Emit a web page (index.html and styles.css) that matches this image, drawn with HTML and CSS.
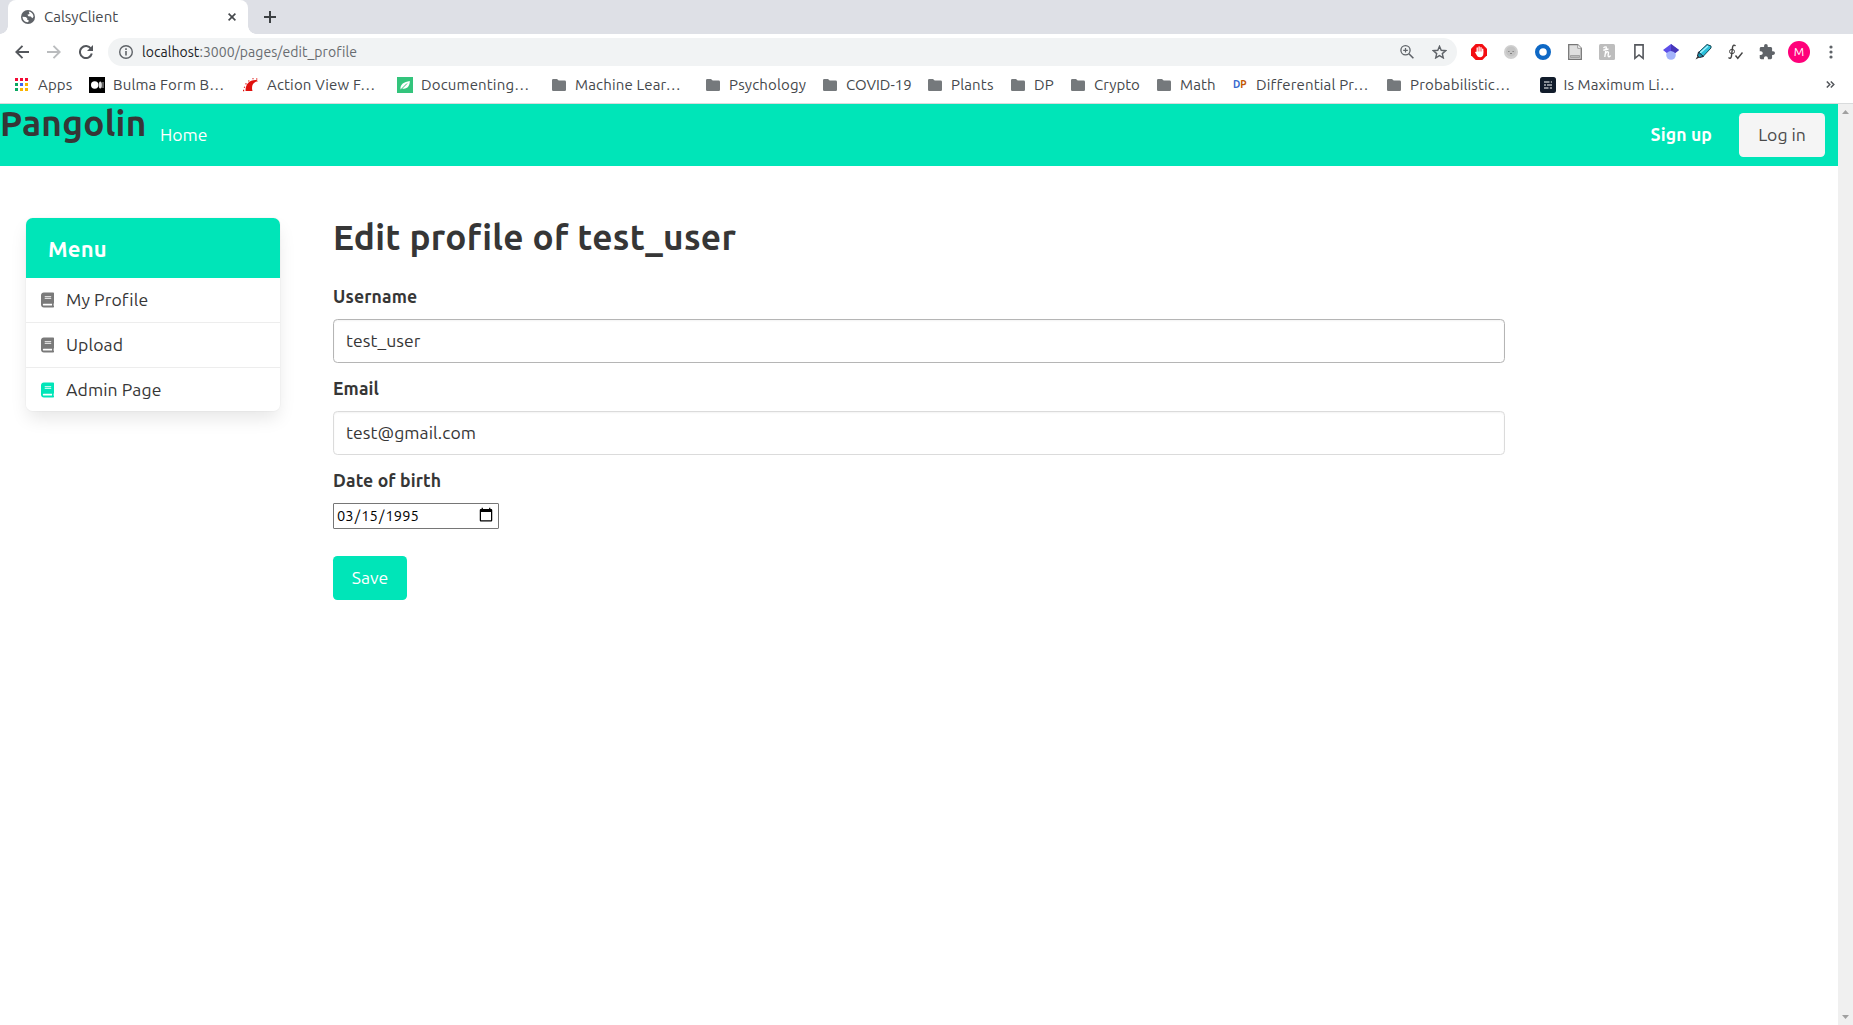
FILE: index.html
```html
<!DOCTYPE html>
<html lang="en-US">
<head>
<meta charset="utf-8">
<title>CalsyClient</title>
<link rel="stylesheet" href="styles.css">
</head>
<body>
<svg width="0" height="0" class="defs">
  <symbol id="folder" viewBox="0 0 14 12"><path d="M0 1.200Q0 0 1.200 0H5l1.700 1.600h6Q14 1.600 14 2.900v7.800Q14 12 12.800 12H1.200Q0 12 0 10.800z" fill="#75797c"/></symbol>
  <symbol id="book" viewBox="0 0 448 512"><path fill="currentColor" d="M448 360V24c0-13.300-10.700-24-24-24H96C43 0 0 43 0 96v320c0 53 43 96 96 96h328c13.300 0 24-10.700 24-24v-16c0-7.500-3.500-14.300-8.900-18.700-4.200-15.400-4.200-59.300 0-74.700 5.400-4.300 8.900-11.100 8.900-18.600zM128 134c0-3.300 2.700-6 6-6h212c3.300 0 6 2.700 6 6v20c0 3.300-2.700 6-6 6H134c-3.300 0-6-2.700-6-6v-20zm0 64c0-3.300 2.700-6 6-6h212c3.300 0 6 2.700 6 6v20c0 3.300-2.700 6-6 6H134c-3.300 0-6-2.700-6-6v-20zm253.400 250H96c-17.700 0-32-14.300-32-32 0-17.600 14.400-32 32-32h285.400c-1.900 17.100-1.900 46.900 0 64z"/></symbol>
</svg>

<div class="tabstrip">
  <div class="tab">
    <svg class="globe" width="14" height="14" viewBox="0 0 14 14"><circle cx="7" cy="7" r="7" fill="#5f6368"/><path d="M1.500 6.800l3.200.1 1.600 1.300-.2 1.500 1.500.2-.2 2.200C4 12.500 1.500 10 1.500 6.800zM7.800 1.500c2.600.3 4.600 2.500 4.700 5.300l-1.200 1.400-1.500-1.800-2.400-.1-1-1.500 2.100-.7z" fill="#fff"/></svg>
    <span class="tab-title">CalsyClient</span>
    <svg width="8" height="8" viewBox="0 0 8 8"><path d="M.6.6l6.800 6.800M7.400.6L.6 7.400" stroke="#45484c" stroke-width="1.600"/></svg>
  </div>
  <svg class="newtab" width="12" height="12" viewBox="0 0 12 12"><path d="M6 0v12M0 6h12" stroke="#3c4043" stroke-width="2"/></svg>
</div>

<div class="toolbar">
  <span class="cell"><svg width="14" height="14" viewBox="0 0 14 14"><path d="M14 7H1.500M7.500.8L1.300 7l6.200 6.200" fill="none" stroke="#54575c" stroke-width="1.900"/></svg></span>
  <span class="cell"><svg width="14" height="14" viewBox="0 0 14 14"><path d="M0 7h12.500M6.500.8L12.700 7l-6.200 6.200" fill="none" stroke="#babcbe" stroke-width="1.900"/></svg></span>
  <span class="cell"><svg width="14" height="14" viewBox="0 0 14 14"><path d="M12 3.800A6 6 0 1 0 12.800 8.500" fill="none" stroke="#54575c" stroke-width="2"/><path d="M14 0v6H8z" fill="#54575c"/></svg></span>
  <div class="omnibox">
    <svg width="14" height="14" viewBox="0 0 14 14"><circle cx="7" cy="7" r="6.300" fill="none" stroke="#5f6368" stroke-width="1.400"/><path d="M7 6v4.500M7 3.200v1.700" stroke="#5f6368" stroke-width="1.600"/></svg>
    <span class="url"><b>localhost</b>:3000/pages/edit_profile</span>
    <span class="cell"><svg width="14" height="14" viewBox="0 0 14 14"><circle cx="5.500" cy="5.300" r="4.600" fill="none" stroke="#5f6368" stroke-width="1.300"/><path d="M5.500 3v4.600M3.200 5.300h4.600" stroke="#5f6368" stroke-width="1.200"/><path d="M8.900 8.700l4.500 4.600" stroke="#5f6368" stroke-width="1.600"/></svg></span>
    <span class="cell"><svg width="15" height="14" viewBox="0 0 15 14"><path d="M7.500 1.300l1.700 4 4.400.4-3.300 2.900 1 4.300-3.800-2.300-3.800 2.300 1-4.300L1.400 5.700l4.400-.4z" fill="none" stroke="#5f6368" stroke-width="1.400"/></svg></span>
  </div>
  <span class="cell"><svg width="16" height="16" viewBox="0 0 16 16"><path d="M4.700 0h6.600L16 4.700v6.600L11.300 16H4.700L0 11.300V4.700z" fill="#f40d12"/><path d="M6.200 8V4M8.100 8V3M10 8V3.700M11.700 8V5.200" stroke="#fff" stroke-width="1.300" stroke-linecap="round"/><path d="M5.500 7.500h6.850v2.300c0 2.300-1.300 3.400-3.300 3.400-1.900 0-2.600-.8-3.300-2L4 8.200q.6-1 1.500-.1z" fill="#fff"/></svg></span>
  <span class="cell"><svg width="14" height="14" viewBox="0 0 14 14"><circle cx="7" cy="7" r="7" fill="#d0d0d0"/><circle cx="7" cy="6.500" r="5" fill="#c4c4c4"/><path d="M4.200 6.500h1.300M8.500 6.500h1.300M6 8.500h2" stroke="#808080" fill="none"/></svg></span>
  <span class="cell"><svg width="16" height="16" viewBox="0 0 16 16"><circle cx="8" cy="8" r="5.900" fill="#fff" stroke="#0e68c5" stroke-width="4.200"/></svg></span>
  <span class="cell"><svg width="14" height="16" viewBox="0 0 14 16"><path d="M.7.7h9l3.600 3.600v11H.7z" fill="#e0e0e0" stroke="#777" stroke-width="1.300"/><path d="M9.700.7v3.600h3.600" fill="#fff" stroke="#999"/><path d="M2.500 11.500h9v2h-9z" fill="#bbb" stroke="#888" stroke-width=".6"/></svg></span>
  <span class="cell"><svg width="16" height="16" viewBox="0 0 16 16"><rect width="16" height="16" rx="1.500" fill="#bdbdbd"/><path d="M4.500 4Q6 2.300 7.300 3.200L5.800 13M6.500 9.500Q8 7.300 9 7.800q.9.500.3 2.200-.7 3 .8 2.700 1-.2 1.500-1.200M4.300 6.300L9.500 5" fill="none" stroke="#fff" stroke-width="1.400"/></svg></span>
  <span class="cell"><svg width="10" height="16" viewBox="0 0 10 16"><path d="M.9.9h8.200v13.400L5 11l-4.100 3.300z" fill="none" stroke="#54575c" stroke-width="1.600"/></svg></span>
  <span class="cell"><svg width="16" height="16" viewBox="0 0 16 16"><circle cx="8" cy="11" r="4.800" fill="#a3b3fb"/><path d="M8 0L0 6l3.700 3Q8 5 12.300 9L16 6z" fill="#5c4ee8"/><path d="M8 0l8 6-3.700 3Q10.500 7 8 7z" fill="#4637b9"/></svg></span>
  <span class="cell"><svg width="17" height="16" viewBox="0 0 17 16"><path d="M4 8l8-7.500 4 1.500v2L8 12.500l-3-.5z" fill="#29bfda" stroke="#164957"/><path d="M5 9l8-7" stroke="#a5f3ff" stroke-width="1.500"/><path d="M3.500 8L8.500 12.500 4.500 13.500 2.500 12z" fill="#1597b0" stroke="#223"/><path d="M2.500 12L.5 15.500l4-2z" fill="#333"/></svg></span>
  <span class="cell"><svg width="16" height="16" viewBox="0 0 16 16"><path d="M8.500 2Q6.500-.2 5.600 3L4.400 12.500Q3.500 15.500 1.500 13.500" fill="none" stroke="#444" stroke-width="1.400"/><ellipse cx="5" cy="7.500" rx="2.500" ry="2.200" fill="none" stroke="#444"/><path d="M8.500 11.500l2.300 2.800L15.500 8.500" fill="none" stroke="#444" stroke-width="1.400"/></svg></span>
  <span class="cell"><svg width="16" height="16" viewBox="1 1 22 22"><path fill="#5f6368" d="M20.500 11H19V7c0-1.100-.9-2-2-2h-4V3.500a2.500 2.500 0 0 0-5 0V5H4c-1.100 0-1.990.9-1.990 2v3.800H3.500c1.490 0 2.700 1.210 2.700 2.700s-1.210 2.700-2.700 2.700H2V20c0 1.100.9 2 2 2h3.800v-1.500c0-1.490 1.210-2.700 2.700-2.700s2.700 1.210 2.700 2.700V22H17c1.100 0 2-.9 2-2v-4h1.500a2.500 2.500 0 0 0 0-5z"/></svg></span>
  <span class="cell"><span class="avatar">M</span></span>
  <span class="cell"><svg width="4" height="14" viewBox="0 0 4 14"><g fill="#5f6368"><circle cx="2" cy="2" r="1.600"/><circle cx="2" cy="7" r="1.600"/><circle cx="2" cy="12" r="1.600"/></g></svg></span>
</div>

<div class="bookmarks">
  <div class="bm apps"><svg width="13" height="13" viewBox="0 0 13 13"><path fill="#f30b35" d="M0 0h3v3H0zM5 0h3v3H5zM10 0h3v3h-3z"/><path fill="#0aa861" d="M0 5h3v3H0zM0 10h3v3H0z"/><path fill="#3d64f2" d="M5 5h3v3H5z"/><path fill="#fbb400" d="M10 5h3v3h-3zM5 10h3v3H5zM10 10h3v3h-3z"/></svg><span>Apps</span></div>
  <div class="bm site"><svg width="16" height="16" viewBox="0 0 16 16"><path d="M0 0h16v16H0z"/><circle cx="5.700" cy="8" r="3.700" fill="#fff"/><ellipse cx="11.300" cy="8" rx="1.600" ry="3.500" fill="#ddd"/><path d="M14 5v6" stroke="#bbb"/></svg><span>Bulma Form B…</span></div>
  <div class="bm site"><svg width="16" height="16" viewBox="0 0 16 16"><path d="M2.500 14C2.500 7 6.500 2.500 13.500 3l1.500 1.300C10 5 8 9 9.500 14z" fill="#e0100d"/><path d="M1 10l1 .5M2.500 6.500l1 .7M5.500 3.500l.6.900M10 1.300v1M0 13.500h1.200M14 1.500l-.5 1" stroke="#e0100d" stroke-width="1.300"/></svg><span>Action View F…</span></div>
  <div class="bm site"><svg width="16" height="16" viewBox="0 0 16 16"><path d="M0 0h16v16H0z" fill="#33c47c"/><path d="M3.500 12.500C3 7 7 5 12.800 4c.2 5-2.800 8.500-7.500 7.500z" fill="#fff"/><path d="M4 12.500L10 6.500" stroke="#33c47c"/></svg><span>Documenting…</span></div>
  <div class="bm"><svg width="14" height="12"><use href="#folder"/></svg><span>Machine Lear…</span></div>
  <div class="bm"><svg width="14" height="12"><use href="#folder"/></svg><span>Psychology</span></div>
  <div class="bm"><svg width="14" height="12"><use href="#folder"/></svg><span class="plain">COVID-19</span></div>
  <div class="bm"><svg width="14" height="12"><use href="#folder"/></svg><span>Plants</span></div>
  <div class="bm"><svg width="14" height="12"><use href="#folder"/></svg><span>DP</span></div>
  <div class="bm"><svg width="14" height="12"><use href="#folder"/></svg><span class="plain">Crypto</span></div>
  <div class="bm"><svg width="14" height="12"><use href="#folder"/></svg><span>Math</span></div>
  <div class="bm site"><span class="dp"><i>D</i>P</span><span>Differential Pr…</span></div>
  <div class="bm"><svg width="14" height="12"><use href="#folder"/></svg><span>Probabilistic…</span></div>
  <div class="bm tight"><svg width="16" height="16" viewBox="0 0 16 16"><rect width="16" height="16" rx="2.500" fill="#111c2b"/><path d="M4 5h5.500M10.800 5H12M4 8h2M7 8h5M4 11h4.500M9.800 11H12" stroke="#fff" stroke-width="1.200"/></svg><span>Is Maximum Li…</span></div>
  <svg class="more" width="9" height="7" viewBox="0 0 9 7"><path d="M.8.500l3 3-3 3M4.800.500l3 3-3 3" fill="none" stroke="#54575c" stroke-width="1.500"/></svg>
</div>

<div class="viewport">
  <div class="page">
    <nav class="navbar">
      <h1 class="brand">Pangolin</h1>
      <a class="home">Home</a>
      <a class="signup">Sign up</a>
      <a class="login">Log in</a>
    </nav>
    <main class="content">
      <aside class="menu">
        <h2>Menu</h2>
        <a class="item"><svg width="14" height="16"><use href="#book"/></svg><span>My Profile</span></a>
        <a class="item"><svg width="14" height="16"><use href="#book"/></svg><span>Upload</span></a>
        <a class="item active"><svg width="14" height="16"><use href="#book"/></svg><span>Admin Page</span></a>
      </aside>
      <form class="form">
        <h1>Edit profile of test_user</h1>
        <div class="field">
          <label>Username</label>
          <input class="input hovered" type="text" value="test_user">
        </div>
        <div class="field">
          <label>Email</label>
          <input class="input" type="text" value="test@gmail.com">
        </div>
        <div class="field">
          <label>Date of birth</label>
          <input class="date" type="date" value="1995-03-15">
        </div>
        <button class="save" type="button">Save</button>
      </form>
    </main>
  </div>
  <div class="scrollbar">
    <svg width="7" height="4" viewBox="0 0 7 4"><path d="M0 4L3.500 0 7 4z" fill="#a0a0a0"/></svg>
    <svg width="7" height="4" viewBox="0 0 7 4"><path d="M0 0h7L3.500 4z" fill="#a0a0a0"/></svg>
  </div>
</div>
</body>
</html>
```
FILE: styles.css
```css
* { box-sizing: border-box; }
html, body { height: 100%; }
body {
  margin: 0;
  display: flex;
  flex-direction: column;
  overflow: hidden;
  background: #fff;
  color: #363636;
  font-family: Ubuntu, "Noto Sans", sans-serif;
  font-size: 17.600px;
}
svg { display: block; flex: none; }
.defs { position: absolute; }
h1, h2 { margin: 0; font-weight: 700; }

/* browser chrome */
.tabstrip {
  flex: none;
  height: 34px;
  display: flex;
  align-items: center;
  padding-left: 8px;
  background: #dee0e6;
}
.tab {
  position: relative;
  width: 240px;
  height: 34px;
  display: flex;
  align-items: center;
  padding: 0 12px 0 13px;
  border-radius: 8px 8px 0 0;
  background: #fff;
}
.tab::before, .tab::after {
  content: "";
  position: absolute;
  bottom: 0;
  width: 8px;
  height: 8px;
}
.tab::before { left: -8px; background: radial-gradient(circle at 0 0, transparent 7.5px, #fff 8px); }
.tab::after { right: -8px; background: radial-gradient(circle at 100% 0, transparent 7.5px, #fff 8px); }
.tab-title {
  flex: 1;
  margin-left: 9px;
  padding-bottom: 2px;
  font-size: 15px;
  color: #45484c;
}
.newtab { margin-left: 16px; }

.toolbar {
  flex: none;
  height: 36px;
  display: flex;
  align-items: center;
  padding: 0 6px;
}
.cell {
  flex: none;
  width: 32px;
  display: flex;
  justify-content: center;
}
.omnibox {
  flex: 1;
  height: 28px;
  display: flex;
  align-items: center;
  margin: 0 6px;
  padding: 0 2px 0 11px;
  border-radius: 14px;
  background: #f1f3f4;
}
.url {
  flex: 1;
  margin-left: 9px;
  font-size: 14px;
  letter-spacing: .05px;
  color: #686c70;
}
.url b { font-weight: 400; color: #202124; }
.avatar {
  width: 22px;
  height: 22px;
  border-radius: 50%;
  background: #ff007a;
  color: #fff;
  font-size: 12px;
  line-height: 22px;
  text-align: center;
}

.bookmarks {
  flex: none;
  height: 34px;
  display: grid;
  grid-template-columns: 74px 154px 154px 155px 154px 117px 105px 83px 60px 86px 75px 155px 153px 286px auto;
  align-items: center;
  justify-content: start;
  padding: 0 0 4px 15px;
  border-bottom: 1px solid #d9dbdc;
  font-size: 15px;
  letter-spacing: .16px;
  color: #45484c;
  white-space: nowrap;
}
.bm { display: flex; align-items: center; gap: 9px; }
.apps { gap: 10px; }
.site { gap: 8px; }
.tight { gap: 7.500px; letter-spacing: .1px; }
.plain { letter-spacing: 0; }
.dp { width: 16px; padding-left: 1px; font-size: 10px; font-weight: 700; letter-spacing: 0; color: #c25700; }
.dp i { font-style: normal; color: #3568cf; }

/* page */
.viewport { flex: 1; min-height: 0; display: flex; }
.page { flex: 1; min-width: 0; }
.scrollbar {
  width: 15px;
  display: flex;
  flex-direction: column;
  align-items: center;
  justify-content: space-between;
  padding: 6px 0;
  background: #f0f0f0;
}
.navbar {
  height: 62px;
  display: flex;
  align-items: center;
  padding-right: 13px;
  background: #00e5b8;
  color: #fff;
}
.brand {
  align-self: flex-start;
  width: 160px;
  font-size: 35.200px;
  line-height: 39.600px;
  letter-spacing: .28px;
  color: #363636;
}
.home, .signup { line-height: 44px; }
.home { flex: 1; }
.signup { margin-right: 27px; font-weight: 700; letter-spacing: .13px; }
.login {
  width: 86px;
  height: 44px;
  border-radius: 4.400px;
  background: #f5f5f5;
  color: #4a4a4a;
  line-height: 44px;
  text-align: center;
}
.content { display: flex; align-items: flex-start; padding: 52px 0 0 26px; }
.menu {
  width: 254px;
  border-radius: 6.600px;
  overflow: hidden;
  box-shadow: 0 9px 18px -2px rgba(10,10,10,.1), 0 0 0 1px rgba(10,10,10,.02);
}
.menu h2 {
  height: 60px;
  padding-left: 22px;
  background: #00e5b8;
  color: #fff;
  font-size: 22px;
  line-height: 61px;
  letter-spacing: .2px;
}
.item {
  height: 45px;
  display: flex;
  align-items: center;
  gap: 12px;
  padding-left: 15px;
  border-bottom: 1px solid #ededed;
  line-height: 42px;
  letter-spacing: .1px;
}
.item svg { width: 13px; color: #7a7a7a; }
.item:last-child { height: 43px; border-bottom: 0; }
.active svg { color: #00e5b8; }

.form { width: 1172px; margin-left: 53px; }
.form h1 {
  height: 65px;
  font-size: 35.200px;
  line-height: 39.600px;
  letter-spacing: .3px;
}
.field { margin-bottom: 12px; }
label {
  display: block;
  margin-bottom: 9px;
  font-weight: 700;
  line-height: 27px;
  letter-spacing: .13px;
}
.input {
  display: block;
  width: 100%;
  height: 44px;
  padding: 0 12px 2px;
  border: 1px solid #dbdbdb;
  border-radius: 4.400px;
  box-shadow: inset 0 1px 2px rgba(10,10,10,.05);
  background: #fff;
  color: #363636;
  font: inherit;
  letter-spacing: .08px;
}
.hovered { border-color: #b5b5b5; }
.date {
  display: block;
  width: 166px;
  height: 26px;
  margin: 0;
  padding: 0 4px 1px 2px;
  border: 1px solid #767676;
  border-radius: 1px;
  background: #fff;
  color: #000;
  font-family: inherit;
  font-size: 14.667px;
  letter-spacing: .1px;
}
.date::-webkit-calendar-picker-indicator {
  width: 16.500px;
  height: 16.500px;
  padding: 0;
  background-size: contain;
}
.save {
  display: block;
  width: 74px;
  height: 44px;
  margin-top: 27px;
  padding: 0 0 2px;
  border: 0;
  border-radius: 4.400px;
  background: #00e5b8;
  color: #fff;
  font: inherit;
}
```
